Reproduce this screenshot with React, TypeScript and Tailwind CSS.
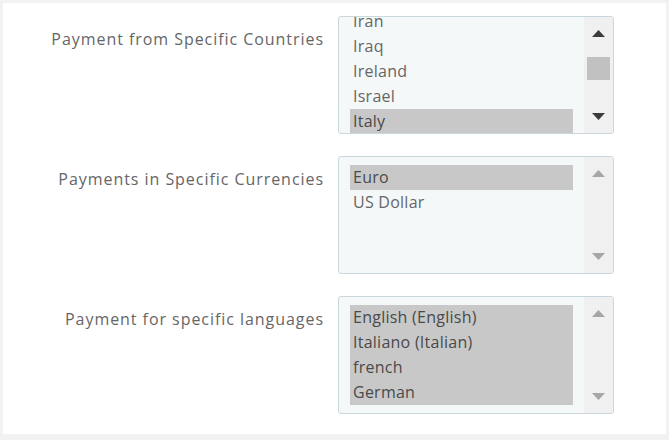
import React from "react";

type ListProps = {
  items: { label: string; selected?: boolean }[];
  offset?: number;
  active?: boolean;
};

function Arrow({ up, color }: { up: boolean; color: string }) {
  return (
    <svg width="13" height="7" viewBox="0 0 13 7" className="block">
      {up ? (
        <polygon points="0,7 6.5,0 13,7" fill={color} />
      ) : (
        <polygon points="0,0 13,0 6.5,7" fill={color} />
      )}
    </svg>
  );
}

function ListBox({ items, offset = 8, active = false }: ListProps) {
  const arrowColor = active ? "#3c3c3c" : "#a6a6a6";
  return (
    <div className="flex h-[118px] w-[276px] overflow-hidden rounded-[3px] border border-[#c9d8dd] bg-[#f5f8f9]">
      <div className="relative flex-1 overflow-hidden pl-[11px]">
        <div style={{ marginTop: offset }}>
          {items.map((it) => (
            <div
              key={it.label}
              className={
                "h-[25px] w-[223px] pl-[3px] text-[16px] leading-[25px] tracking-[0.25px] " +
                (it.selected ? "bg-[#c8c8c8] text-[#4a4a4a]" : "text-[#666666]")
              }
            >
              {it.label}
            </div>
          ))}
        </div>
      </div>
      <div className="relative flex w-[29px] flex-col items-center bg-[#f0f0f0]">
        <div className="mt-[13px]">
          <Arrow up color={arrowColor} />
        </div>
        {active ? (
          <div className="mt-[20px] h-[23px] w-[23px] bg-[#c1c1c1]" />
        ) : null}
        <div className="mt-auto mb-[13px]">
          <Arrow up={false} color={arrowColor} />
        </div>
      </div>
    </div>
  );
}

function Row({ label, children }: { label: string; children: React.ReactNode }) {
  return (
    <div className="flex">
      <div className="w-[321px] whitespace-nowrap pt-[11px] text-right text-[16px] leading-[25px] tracking-[0.95px] text-[#666666]">
        {label}
      </div>
      <div className="ml-[14px]">{children}</div>
    </div>
  );
}

export default function App() {
  return (
    <div
      className="h-[440px] w-[669px] bg-[#f2f2f2] pt-[3px] pl-[3px]"
      style={{ fontFamily: '"Open Sans", "Noto Sans", sans-serif' }}
    >
      <div className="flex h-[431px] w-[663px] flex-col gap-[22px] bg-white pt-[13px]">
        <Row label="Payment from Specific Countries">
          <ListBox
            active
            offset={-8}
            items={[
              { label: "Iran" },
              { label: "Iraq" },
              { label: "Ireland" },
              { label: "Israel" },
              { label: "Italy", selected: true },
            ]}
          />
        </Row>
        <Row label="Payments in Specific Currencies">
          <ListBox
            items={[{ label: "Euro", selected: true }, { label: "US Dollar" }]}
          />
        </Row>
        <Row label="Payment for specific languages">
          <ListBox
            items={[
              { label: "English (English)", selected: true },
              { label: "Italiano (Italian)", selected: true },
              { label: "french", selected: true },
              { label: "German", selected: true },
            ]}
          />
        </Row>
      </div>
    </div>
  );
}
